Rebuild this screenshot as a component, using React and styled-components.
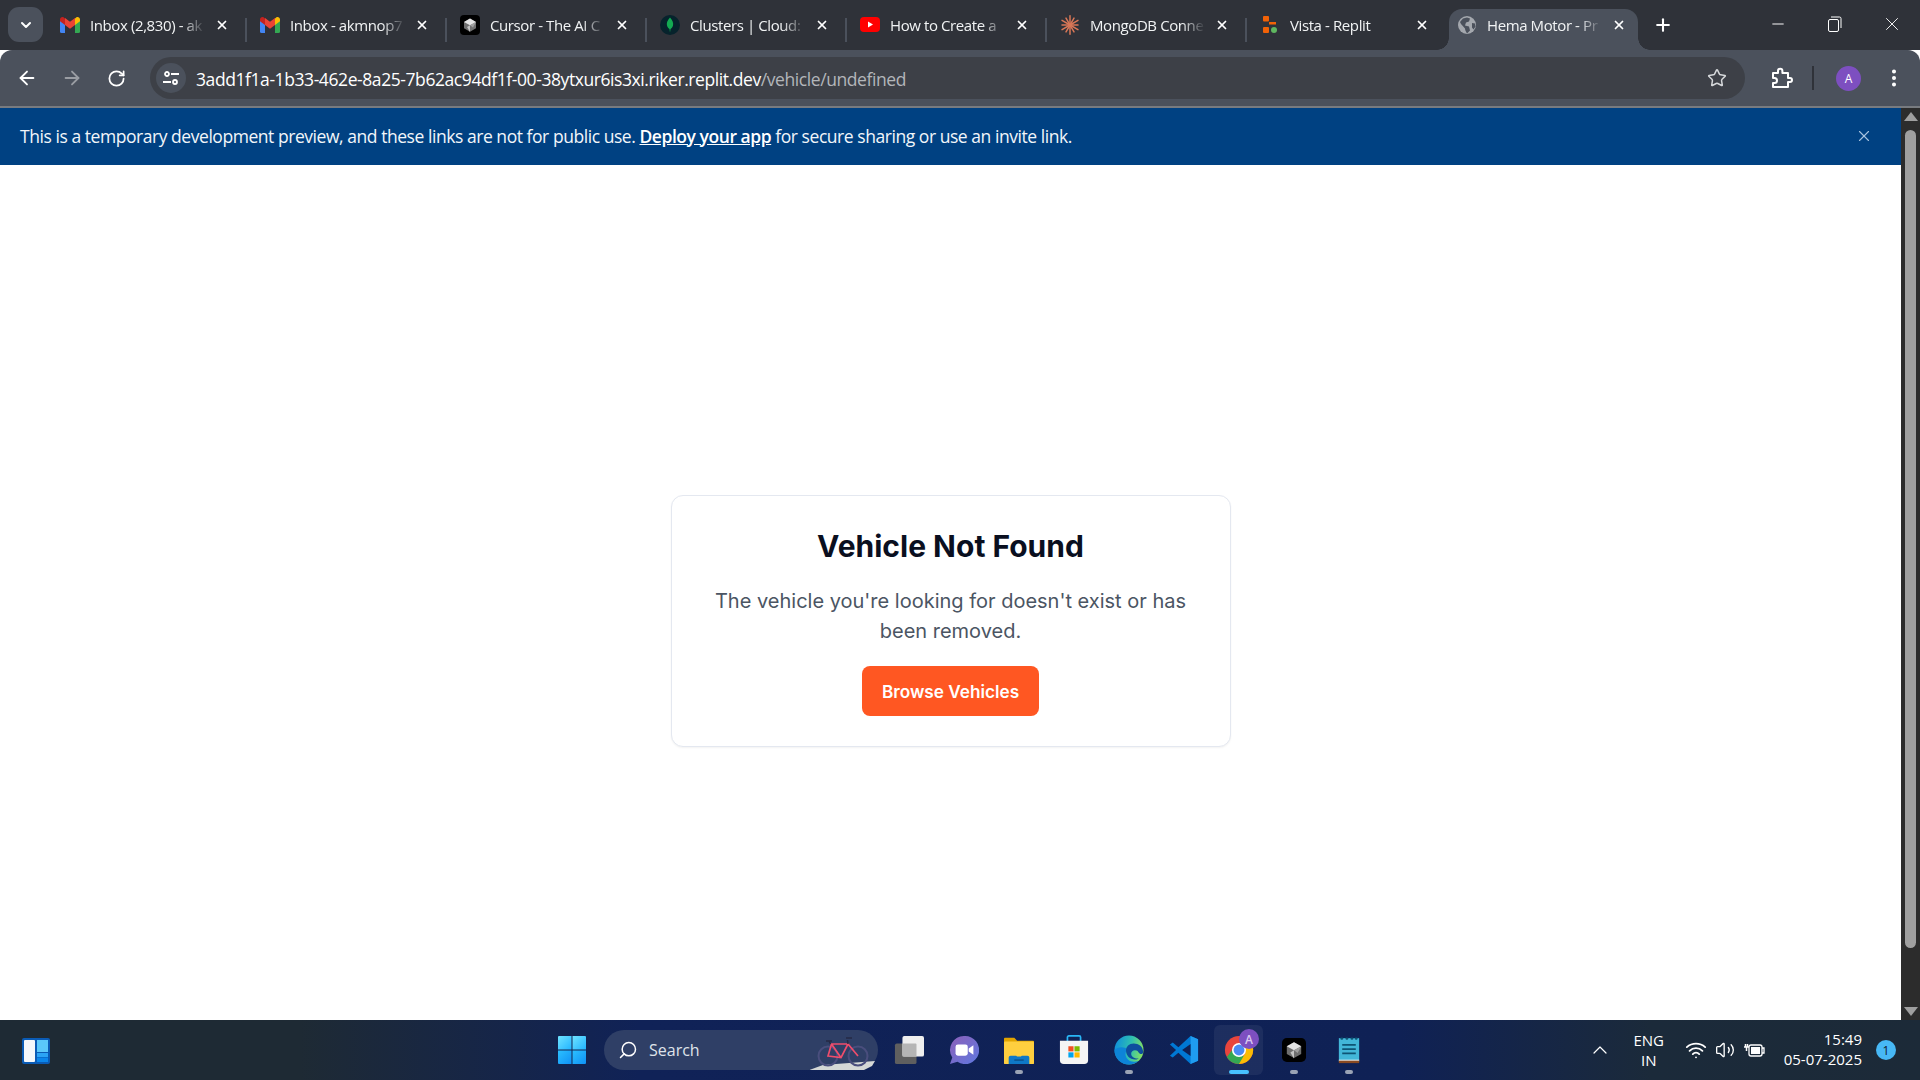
import styled, { createGlobalStyle } from "styled-components";
import {
  ArrowLeft,
  ArrowRight,
  ChevronDown,
  ChevronUp,
  EllipsisVertical,
  Minus,
  Plus,
  RotateCw,
  Search,
  Star,
  Volume2,
  Wifi,
  X,
} from "lucide-react";

const GlobalStyle = createGlobalStyle`
  html, body {
    margin: 0;
    padding: 0;
    width: 1920px;
    height: 1080px;
    overflow: hidden;
    background: #fff;
  }
  * { box-sizing: border-box; }
`;

const Screen = styled.div`
  width: 1920px;
  height: 1080px;
  display: flex;
  flex-direction: column;
  font-family: "Open Sans", "Noto Sans", sans-serif;
  overflow: hidden;
`;

/* browser chrome */
const TabStrip = styled.div`
  height: 50px;
  flex: none;
  display: flex;
  align-items: flex-end;
  padding-left: 8px;
  background: #2f3239;
  color: #fff;
`;

const TabSearch = styled.div`
  width: 35px;
  height: 35px;
  margin: 7px 4px 0 0;
  align-self: flex-start;
  border-radius: 11px;
  background: #4b515c;
  display: flex;
  align-items: center;
  justify-content: center;
`;

const Tab = styled.div`
  width: ${(p) => (p.$active ? "189px" : "200px")};
  height: 41px;
  flex: none;
  display: flex;
  align-items: center;
  padding: ${(p) => (p.$active ? "0 12px 10px 8px" : "0 18px 10px 13px")};
  gap: 10px;
  position: relative;
  background: ${(p) => (p.$active ? "#4b515c" : "transparent")};
  border-radius: 13px 13px 0 0;
  margin-left: ${(p) => (p.$active ? "2px" : "0")};
  &::after {
    content: "";
    display: ${(p) => (p.$sep ? "block" : "none")};
    position: absolute;
    right: 0;
    top: 9px;
    height: 24px;
    width: 2px;
    background: #4b515c;
  }
`;

const TabFlare = styled.span`
  position: absolute;
  bottom: 0;
  width: 12px;
  height: 12px;
  ${(p) => (p.$right ? "right: -12px;" : "left: -12px;")}
  background: radial-gradient(
    circle at ${(p) => (p.$right ? "100% 0" : "0 0")},
    transparent 11.5px,
    #4b515c 12px
  );
`;

const TabIcon = styled.span`
  width: 20px;
  height: 20px;
  flex: none;
  display: flex;
  align-items: center;
  justify-content: center;
`;

const TabTitle = styled.span`
  flex: 1;
  min-width: 0;
  white-space: nowrap;
  overflow: hidden;
  font-size: 15px;
  letter-spacing: -0.4px;
  color: #f1f3f4;
  -webkit-mask-image: linear-gradient(to right, #000 80%, transparent 100%);
  mask-image: linear-gradient(to right, #000 80%, transparent 100%);
`;

const NewTab = styled.div`
  width: 50px;
  height: 41px;
  display: flex;
  align-items: center;
  justify-content: center;
  padding-bottom: 10px;
`;

const WindowControls = styled.div`
  margin-left: auto;
  align-self: stretch;
  display: flex;
  align-items: center;
`;

const WindowButton = styled.div`
  width: 57px;
  height: 50px;
  padding-bottom: 2px;
  display: flex;
  align-items: center;
  justify-content: center;
`;

const Toolbar = styled.div`
  height: 58px;
  flex: none;
  display: flex;
  align-items: center;
  padding-left: 4px;
  background: #4b515c;
  border-bottom: 2px solid #787b80;
  border-radius: 12px 12px 0 0;
  color: #fff;
`;

const ToolButton = styled.div`
  width: 45px;
  height: 40px;
  flex: none;
  margin-left: ${(p) => p.$gap || 0}px;
  display: flex;
  align-items: center;
  justify-content: center;
`;

const Omnibox = styled.div`
  width: 1595px;
  height: 42px;
  margin-left: 11px;
  flex: none;
  display: flex;
  align-items: center;
  padding: 0 18px 0 6px;
  border-radius: 21px;
  background: #3d4047;
`;

const SiteInfo = styled.div`
  width: 30px;
  height: 30px;
  border-radius: 50%;
  background: #4b515c;
  flex: none;
  display: flex;
  align-items: center;
  justify-content: center;
`;

const Url = styled.div`
  flex: 1;
  margin-left: 10px;
  padding-top: 2px;
  font-size: 17.5px;
  letter-spacing: -0.42px;
  white-space: nowrap;
  color: #fff;
  span {
    color: #b3b6ba;
  }
`;

const ToolDivider = styled.div`
  width: 2px;
  height: 24px;
  margin: 0 22px 0 9px;
  background: #2f3239;
`;

const Avatar = styled.div`
  width: 25px;
  height: 25px;
  border-radius: 50%;
  background: #7d4fc0;
  color: #fff;
  font-size: 12px;
  display: flex;
  align-items: center;
  justify-content: center;
  flex: none;
`;

/* page */
const Viewport = styled.div`
  flex: 1;
  min-height: 0;
  display: flex;
`;

const PageColumn = styled.div`
  flex: 1;
  min-width: 0;
  display: flex;
  flex-direction: column;
`;

const Banner = styled.div`
  height: 57px;
  flex: none;
  display: flex;
  align-items: center;
  justify-content: space-between;
  padding: 0 28px 2px 20px;
  background: #004182;
  color: #f2f6fa;
  font-size: 17.5px;
  letter-spacing: -0.45px;
  a {
    color: #fff;
    font-weight: 600;
    text-decoration: underline;
  }
`;

const Page = styled.main`
  flex: 1;
  background: #fff;
  display: flex;
  justify-content: center;
  align-items: flex-start;
  padding-top: 330px;
  font-family: Inter, sans-serif;
`;

const Card = styled.section`
  width: 560px;
  padding: 32px 32px 30px;
  border: 1px solid #e4e8f0;
  border-radius: 12px;
  background: #fff;
  box-shadow: 0 1px 2px rgba(0, 0, 0, 0.05);
  display: flex;
  flex-direction: column;
  align-items: center;
  text-align: center;
`;

const Title = styled.h1`
  margin: 0 0 22px;
  font-size: 30px;
  line-height: 36px;
  font-weight: 700;
  color: #0a0f1f;
`;

const Message = styled.p`
  margin: 0 0 20px;
  font-size: 20px;
  line-height: 30px;
  color: #4b5563;
`;

const BrowseButton = styled.button`
  width: 177px;
  height: 50px;
  padding: 0;
  border: 0;
  border-radius: 8px;
  background: #ff5722;
  color: #fff;
  font-family: inherit;
  font-size: 17.2px;
  font-weight: 600;
`;

const Scrollbar = styled.div`
  width: 19px;
  flex: none;
  display: flex;
  flex-direction: column;
  align-items: center;
  background: #2c2c2c;
  padding: 4px 0;
`;

const ScrollArrow = styled.div`
  width: 0;
  height: 0;
  flex: none;
  border-left: 7px solid transparent;
  border-right: 7px solid transparent;
  ${(p) => (p.$down ? "border-top" : "border-bottom")}: 9px solid #9f9f9f;
`;

const ScrollThumb = styled.div`
  width: 11px;
  height: 818px;
  margin-top: 9px;
  margin-bottom: auto;
  border-radius: 6px;
  background: #9f9f9f;
`;

/* taskbar */
const Taskbar = styled.footer`
  height: 60px;
  flex: none;
  display: flex;
  align-items: center;
  padding-left: 21px;
  color: #fff;
  background: linear-gradient(
    to right,
    #1e2a34 0,
    #1e2a34 300px,
    #102257 640px,
    #0f2155 1400px,
    #1b2a3a 1650px,
    #1c2a38 100%
  );
`;

const WidgetSlot = styled.div`
  width: 30px;
  height: 30px;
  margin-right: 495px;
  flex: none;
`;

const StartSlot = styled.div`
  width: 52px;
  height: 52px;
  flex: none;
  display: flex;
  align-items: center;
  justify-content: center;
`;

const SearchBox = styled.div`
  width: 274px;
  height: 40px;
  margin: 0 3px 0 6px;
  flex: none;
  position: relative;
  border-radius: 20px;
  background: #2f3f66;
  display: flex;
  align-items: center;
  padding-left: 14px;
  gap: 11px;
  font-size: 16px;
  color: #dfe3ea;
`;

const SearchGlass = styled(Search)`
  transform: scaleX(-1);
`;

const SearchArt = styled.div`
  position: absolute;
  right: 2px;
  bottom: 0;
  width: 66px;
  height: 38px;
`;

const TaskItem = styled.div`
  width: 55px;
  height: 52px;
  flex: none;
  position: relative;
  display: flex;
  align-items: center;
  justify-content: center;
  &::before {
    content: "";
    display: ${(p) => (p.$active ? "block" : "none")};
    position: absolute;
    inset: 1px 3px;
    border-radius: 6px;
    background: rgba(255, 255, 255, 0.06);
  }
  svg {
    position: relative;
  }
  &::after {
    content: "";
    display: ${(p) => (p.$state ? "block" : "none")};
    position: absolute;
    bottom: 2px;
    left: 50%;
    transform: translateX(-50%);
    width: ${(p) => (p.$state === "active" ? "20px" : "8px")};
    height: 4px;
    border-radius: 2px;
    background: ${(p) => (p.$state === "active" ? "#47c1ff" : "#9aa3b5")};
  }
`;

const ProfileBadge = styled.span`
  position: absolute;
  top: 5px;
  left: 28px;
  width: 20px;
  height: 20px;
  border-radius: 50%;
  background: #7d4fc0;
  color: #d9c8f0;
  font-size: 12px;
  font-weight: 600;
  display: flex;
  align-items: center;
  justify-content: center;
`;

const Tray = styled.div`
  margin-left: auto;
  display: flex;
  align-items: center;
  height: 100%;
`;

const Lang = styled.div`
  width: 46px;
  margin: 0 13px 0 14px;
  text-align: center;
  font-size: 15px;
  line-height: 20px;
  color: #fff;
`;

const TrayIcons = styled.div`
  display: flex;
  align-items: center;
  gap: 8px;
`;

const Clock = styled.div`
  margin-left: 19px;
  padding-bottom: 2px;
  text-align: right;
  font-size: 15px;
  line-height: 20px;
  color: #fff;
`;

const Badge = styled.div`
  width: 20px;
  height: 20px;
  margin: 0 24px 0 14px;
  border-radius: 50%;
  background: #47b8f5;
  color: #10202e;
  font-size: 12px;
  display: flex;
  align-items: center;
  justify-content: center;
`;

const GmailIcon = () => (
  <svg width="20" height="16" viewBox="0 0 20 16">
    <path d="M0 3v11.5A1.5 1.5 0 0 0 1.5 16H5V7z" fill="#4285f4" />
    <path d="M20 3v11.5a1.5 1.5 0 0 1-1.5 1.5H15V7z" fill="#34a853" />
    <path d="M15 1v7l-5 3.8L5 8V1l5 3.8z" fill="#ea4335" />
    <path d="M0 2.5C0 .6 2.2-.6 3.8.6L5 1.5V8L0 4.2z" fill="#c5221f" />
    <path d="M20 2.5c0-1.9-2.2-3.1-3.8-1.9L15 1.5V8l5-3.8z" fill="#fbbc04" />
  </svg>
);

const CursorIcon = ({ size = 20 }) => (
  <svg width={size} height={size} viewBox="0 0 20 20">
    <rect width="20" height="20" rx="4" fill="#000" />
    <path d="M10 3.5l6 3.4v6.4l-6 3.4-6-3.4V6.9z" fill="#6f6f6f" />
    <path d="M4 6.9l6 3.4 6-3.4-6-3.4z" fill="#e4e4e4" />
    <path d="M10 10.3V17l-3-5z" fill="#c4c4c4" />
    <path d="M10 10.3L16 7l-3 5.500z" fill="#a0a0a0" />
  </svg>
);

const MongoIcon = () => (
  <svg width="20" height="20" viewBox="0 0 20 20">
    <circle cx="10" cy="10" r="10" fill="#06232c" />
    <path d="M10 2.5c2.800 3 3.600 5.600 3 8-.4 1.800-1.700 3-2.500 3.600L10 17.500l-.5-3.400C8.700 13.500 7.400 12.300 7 10.500c-.6-2.400.2-5 3-8z" fill="#13aa52" />
  </svg>
);

const YoutubeIcon = () => (
  <svg width="20" height="15" viewBox="0 0 20 15">
    <rect width="20" height="15" rx="4" fill="#f00" />
    <path d="M8 4.500l5 3-5 3z" fill="#fff" />
  </svg>
);

const ClaudeIcon = () => (
  <svg width="20" height="20" viewBox="0 0 20 20" stroke="#d97757" strokeWidth="1.500" strokeLinecap="round">
    {[0, 30, 60, 90, 120, 150, 180, 210, 240, 270, 300, 330].map((a) => (
      <line key={a} x1="10" y1="10" x2="10" y2={a % 60 === 0 ? 0.8 : 2} transform={`rotate(${a} 10 10)`} />
    ))}
  </svg>
);

const ReplitIcon = () => (
  <svg width="16" height="18" viewBox="0 0 16 18">
    <rect x="1" y="0" width="6" height="5.500" rx="1" fill="#f26207" />
    <rect x="7" y="6" width="7" height="2.500" fill="#f26207" />
    <rect x="1" y="11" width="6" height="6" rx="1" fill="#f26207" />
    <circle cx="12" cy="14" r="3" fill="#5fb760" />
  </svg>
);

const GlobeIcon = () => (
  <svg width="20" height="20" viewBox="0 0 20 20">
    <circle cx="10" cy="10" r="9" fill="#a4a8ae" />
    <path d="M6 3.500l4-1 3 1-1 3-3 1-1 3 4 1 1 4-3 3c-1-2-2-3-2-5L4 9 3 7zM15 8l3 .5.500 3-2 3-1.500-2z" fill="#4b515c" />
  </svg>
);

const SiteTuneIcon = () => (
  <svg width="18" height="18" viewBox="0 0 18 18" fill="none" stroke="#fff" strokeWidth="1.800">
    <circle cx="5" cy="5" r="2" />
    <path d="M9 5h8M1 13h8" />
    <circle cx="13" cy="13" r="2" />
  </svg>
);

const PuzzleIcon = () => (
  <svg width="24" height="24" viewBox="0 0 24 24" fill="none" stroke="#fff" strokeWidth="2" strokeLinejoin="round">
    <path d="M4 7h5V5a2.200 2.200 0 0 1 4.400 0v2H19v5h2a2 2 0 0 1 0 4h-2v5H4v-4h1.500a2.500 2.500 0 0 0 0-5H4z" />
  </svg>
);

const RestoreIcon = () => (
  <svg width="14" height="16" viewBox="0 0 14 16" fill="none" stroke="#fff" strokeWidth="1">
    <rect x="0.500" y="3.500" width="10" height="12" rx="1.500" />
    <path d="M3 1h8.500A1.500 1.500 0 0 1 13 2.500V12" />
  </svg>
);

const WidgetsIcon = () => (
  <svg width="30" height="30" viewBox="0 0 30 30">
    <rect x="1" y="3" width="28" height="26" rx="2" fill="#0a5bb5" />
    <rect x="3" y="5" width="11" height="22" rx="1" fill="#f4f7fa" />
    <rect x="16" y="5" width="11" height="12" fill="#5ac8fa" />
    <rect x="16" y="18" width="11" height="4" fill="#2ba4f5" />
    <rect x="16" y="22.500" width="11" height="4.500" fill="#0b86ea" />
  </svg>
);

const StartIcon = () => (
  <svg width="30" height="30" viewBox="0 0 30 30">
    <defs>
      <linearGradient id="startTop" x1="0" y1="0" x2="1" y2="1">
        <stop offset="0" stopColor="#6fe3ff" />
        <stop offset="1" stopColor="#22b4ff" />
      </linearGradient>
      <linearGradient id="startBottom" x1="0" y1="0" x2="1" y2="1">
        <stop offset="0" stopColor="#2cc0ff" />
        <stop offset="1" stopColor="#0f91f5" />
      </linearGradient>
    </defs>
    <path d="M1 2a1 1 0 0 1 1-1h12.500v13.500H1z" fill="url(#startTop)" />
    <path d="M15.500 1H28a1 1 0 0 1 1 1v12.500H15.500z" fill="url(#startTop)" />
    <path d="M1 15.500h13.500V29H2a1 1 0 0 1-1-1z" fill="url(#startBottom)" />
    <path d="M15.500 15.500H29V28a1 1 0 0 1-1 1H15.500z" fill="url(#startBottom)" />
  </svg>
);

const BikeArt = () => (
  <svg width="66" height="38" viewBox="0 0 66 38">
    <path d="M-1 38l14-5 52-4-3 5-8 4z" fill="#d5d8d6" />
    <g fill="none">
      <circle cx="18" cy="24" r="9.500" stroke="#4a4e7d" strokeWidth="2" />
      <circle cx="48" cy="24" r="9.500" stroke="#4a4e7d" strokeWidth="2" />
      <path d="M18 24l13 1.700L38 12H21.500zM21.500 12l9.500 13.700M38 12l10 12" stroke="#ef4d6c" strokeWidth="1.700" />
      <path d="M20.500 12l-1.500-3M16 9h6M38 12l-.5-4M36 6h6" stroke="#262a45" strokeWidth="1.500" />
    </g>
  </svg>
);

const TaskViewIcon = () => (
  <svg width="30" height="30" viewBox="0 0 32 32">
    <rect x="1" y="9" width="23" height="22" rx="2" fill="#5f5f5f" />
    <rect x="9" y="1" width="23" height="22" rx="2" fill="#efefef" />
    <rect x="9" y="9" width="15" height="14" rx="1" fill="#b5b5b5" />
  </svg>
);

const MeetIcon = () => (
  <svg width="30" height="30" viewBox="0 0 32 32">
    <defs>
      <linearGradient id="meetBg" x1="0" y1="0" x2="1" y2="1">
        <stop offset="0" stopColor="#8c5fb8" />
        <stop offset="1" stopColor="#5f79e0" />
      </linearGradient>
    </defs>
    <path d="M17 1a15 15 0 1 1-8 27.600L1 31l2.500-7A15 15 0 0 1 17 1z" fill="url(#meetBg)" />
    <rect x="7" y="10" width="13" height="12" rx="2.500" fill="#fff" />
    <path d="M21 14.500l5-3.500v10l-5-3.500z" fill="#fff" />
  </svg>
);

const FolderIcon = () => (
  <svg width="30" height="30" viewBox="0 0 32 32">
    <path d="M0 4a1 1 0 0 1 1-1h10l3 3h17a1 1 0 0 1 1 1v6H0z" fill="#e2a400" />
    <rect x="0" y="7" width="32" height="24" rx="1" fill="#ffcf3f" />
    <path d="M5 31v-7a2 2 0 0 1 2-2h6l1 1h4l1-1h6a2 2 0 0 1 2 2v7z" fill="#0f78c8" />
    <rect x="11" y="26" width="10" height="1.500" fill="#0c4f8a" />
  </svg>
);

const StoreIcon = () => (
  <svg width="30" height="30" viewBox="0 0 32 32">
    <path d="M9 7V2.500A1.500 1.500 0 0 1 10.500 1h11A1.500 1.500 0 0 1 23 2.500V7" fill="none" stroke="#29b6f6" strokeWidth="1.800" />
    <path d="M1 6h30v21a4 4 0 0 1-4 4H5a4 4 0 0 1-4-4z" fill="#f5f5f5" />
    <rect x="10" y="12" width="5.500" height="5.500" fill="#f25022" />
    <rect x="16.500" y="12" width="5.500" height="5.500" fill="#7fba00" />
    <rect x="10" y="18.500" width="5.500" height="5.500" fill="#00a4ef" />
    <rect x="16.500" y="18.500" width="5.500" height="5.500" fill="#ffb900" />
  </svg>
);

const EdgeIcon = () => (
  <svg width="30" height="30" viewBox="0 0 32 32">
    <defs>
      <linearGradient id="edgeTop" x1="0" y1="0.300" x2="1" y2="0.500">
        <stop offset="0" stopColor="#0f8fdc" />
        <stop offset="0.550" stopColor="#2fc0b0" />
        <stop offset="1" stopColor="#86e060" />
      </linearGradient>
    </defs>
    <circle cx="16" cy="16" r="15.500" fill="url(#edgeTop)" />
    <path d="M.5 16c0 9 7 15.500 15.500 15.500 4 0 7.500-1.400 10-3.700-4.500 1.700-10 .7-12.500-3.300-2-3.200-1.500-7 1-9-3-3-10-3.500-14 .5z" fill="#0d84d8" />
    <path d="M31 18.500c.5-6-5-9.500-10-9.500-5 0-8.200 3.500-8.200 7.500 0 6 5.200 10.500 11.200 9.500 1-.2 1.700-.5 2.500-1-4 .6-8.200-1.500-8.200-5 0-2.300 1.900-3.700 4-3.700 2.700 0 3.500 1.500 4.200 2.700 1 1.600 4.500 2.200 4.500-.5z" fill="#0e4f9e" />
  </svg>
);

const VsCodeIcon = () => (
  <svg width="30" height="30" viewBox="0 0 32 32">
    <path d="M23 1l8 3.500v23L23 31 10 19l-6 5-3-2 6.500-6L1 10l3-2 6 5z" fill="#0078d4" />
    <path d="M23 1l8 3.500v23L23 31z" fill="#1f9cf0" />
    <path d="M23 9.500L14 16l9 6.500z" fill="#0f2155" />
  </svg>
);

const ChromeIcon = () => (
  <svg width="30" height="30" viewBox="0 0 32 32">
    <circle cx="16" cy="16" r="15" fill="#e8453c" />
    <path d="M16 31A15 15 0 0 1 3 23.500L10 14l6 8 7 0-7 9z" fill="#34a853" />
    <path d="M29 8.500A15 15 0 0 1 16 31l7-12-3-8.500z" fill="#fbbc04" />
    <circle cx="16" cy="16" r="7.500" fill="#fff" />
    <circle cx="16" cy="16" r="5.800" fill="#4a8af4" />
  </svg>
);

const NotepadIcon = () => (
  <svg width="22" height="30" viewBox="0 0 26 32">
    <rect x="1" y="2" width="24" height="28" fill="#42b6d8" />
    <rect x="1" y="28" width="24" height="3.500" fill="#8a4a22" />
    <rect x="1" y="27.500" width="24" height="1" fill="#fff" />
    <path d="M5 10h16M5 15h16M5 20h16" stroke="#0e5474" strokeWidth="2" />
    <path d="M4 2.500h1M10 2.500h1M16 2.500h1M21 2.500h1" stroke="#0e5474" strokeWidth="2.500" strokeLinecap="round" />
  </svg>
);

const BatteryIcon = () => (
  <svg width="22" height="20" viewBox="0 0 22 20" fill="none" stroke="#fff" strokeWidth="1.300">
    <rect x="6" y="5" width="13" height="11" rx="2" />
    <path d="M19 8h2v5h-2" />
    <rect x="8" y="7" width="9" height="7" fill="#fff" stroke="none" />
    <path d="M1 7h5M2.500 4v3M4.500 4v3M3.500 7v4" strokeWidth="1.500" />
  </svg>
);

const tabs = [
  { title: "Inbox (2,830) - ak", icon: <GmailIcon />, sep: true },
  { title: "Inbox - akmnop7", icon: <GmailIcon />, sep: true },
  { title: "Cursor - The AI C", icon: <CursorIcon />, sep: true },
  { title: "Clusters | Cloud:", icon: <MongoIcon />, sep: true },
  { title: "How to Create a", icon: <YoutubeIcon />, sep: true },
  { title: "MongoDB Conne", icon: <ClaudeIcon />, sep: true },
  { title: "Vista - Replit", icon: <ReplitIcon />, sep: false },
  { title: "Hema Motor - Pr", icon: <GlobeIcon />, active: true },
];

export default function App() {
  return (
    <Screen>
      <GlobalStyle />
      <TabStrip>
        <TabSearch>
          <ChevronDown size={16} strokeWidth={3} color="#fff" />
        </TabSearch>
        {tabs.map((tab) => (
          <Tab key={tab.title} $active={tab.active} $sep={tab.sep}>
            {tab.active ? <TabFlare /> : null}
            <TabIcon>{tab.icon}</TabIcon>
            <TabTitle>{tab.title}</TabTitle>
            <X size={14} strokeWidth={3} color="#fff" />
            {tab.active ? <TabFlare $right /> : null}
          </Tab>
        ))}
        <NewTab>
          <Plus size={20} strokeWidth={2.5} color="#fff" />
        </NewTab>
        <WindowControls>
          <WindowButton>
            <Minus size={18} strokeWidth={1.3} color="#fff" />
          </WindowButton>
          <WindowButton>
            <RestoreIcon />
          </WindowButton>
          <WindowButton>
            <X size={22} strokeWidth={1} color="#fff" />
          </WindowButton>
        </WindowControls>
      </TabStrip>

      <Toolbar>
        <ToolButton>
          <ArrowLeft size={22} strokeWidth={2} color="#fff" />
        </ToolButton>
        <ToolButton>
          <ArrowRight size={22} strokeWidth={2} color="#9a9da3" />
        </ToolButton>
        <ToolButton>
          <RotateCw size={19} strokeWidth={2.2} color="#fff" />
        </ToolButton>
        <Omnibox>
          <SiteInfo>
            <SiteTuneIcon />
          </SiteInfo>
          <Url>
            3add1f1a-1b33-462e-8a25-7b62ac94df1f-00-38ytxur6is3xi.riker.replit.dev
            <span>/vehicle/undefined</span>
          </Url>
          <Star size={20} strokeWidth={1.8} color="#d5d7da" />
        </Omnibox>
        <ToolButton $gap={13}>
          <PuzzleIcon />
        </ToolButton>
        <ToolDivider />
        <Avatar>A</Avatar>
        <ToolButton $gap={10}>
          <EllipsisVertical size={22} strokeWidth={2.4} color="#fff" />
        </ToolButton>
      </Toolbar>

      <Viewport>
        <PageColumn>
          <Banner>
            <span>
              This is a temporary development preview, and these links are not for
              public use. <a href="#deploy">Deploy your app</a> for secure sharing or
              use an invite link.
            </span>
            <X size={18} strokeWidth={1.5} color="#a8c4e0" />
          </Banner>
          <Page>
            <Card>
              <Title>Vehicle Not Found</Title>
              <Message>The vehicle you're looking for doesn't exist or has been removed.</Message>
              <BrowseButton>Browse Vehicles</BrowseButton>
            </Card>
          </Page>
        </PageColumn>
        <Scrollbar>
          <ScrollArrow />
          <ScrollThumb />
          <ScrollArrow $down />
        </Scrollbar>
      </Viewport>

      <Taskbar>
        <WidgetSlot>
          <WidgetsIcon />
        </WidgetSlot>
        <StartSlot>
          <StartIcon />
        </StartSlot>
        <SearchBox>
          <SearchGlass size={20} strokeWidth={1.8} color="#fff" />
          Search
          <SearchArt>
            <BikeArt />
          </SearchArt>
        </SearchBox>
        <TaskItem><TaskViewIcon /></TaskItem>
        <TaskItem><MeetIcon /></TaskItem>
        <TaskItem $state="open"><FolderIcon /></TaskItem>
        <TaskItem><StoreIcon /></TaskItem>
        <TaskItem $state="open"><EdgeIcon /></TaskItem>
        <TaskItem><VsCodeIcon /></TaskItem>
        <TaskItem $active $state="active">
          <ChromeIcon />
          <ProfileBadge>A</ProfileBadge>
        </TaskItem>
        <TaskItem $state="open"><CursorIcon size={24} /></TaskItem>
        <TaskItem $state="open"><NotepadIcon /></TaskItem>
        <Tray>
          <ChevronUp size={24} strokeWidth={1.2} color="#fff" />
          <Lang>ENG<br />IN</Lang>
          <TrayIcons>
            <Wifi size={22} strokeWidth={2} color="#fff" />
            <Volume2 size={20} strokeWidth={1.6} color="#fff" />
            <BatteryIcon />
          </TrayIcons>
          <Clock>15:49<br />05-07-2025</Clock>
          <Badge>1</Badge>
        </Tray>
      </Taskbar>
    </Screen>
  );
}
